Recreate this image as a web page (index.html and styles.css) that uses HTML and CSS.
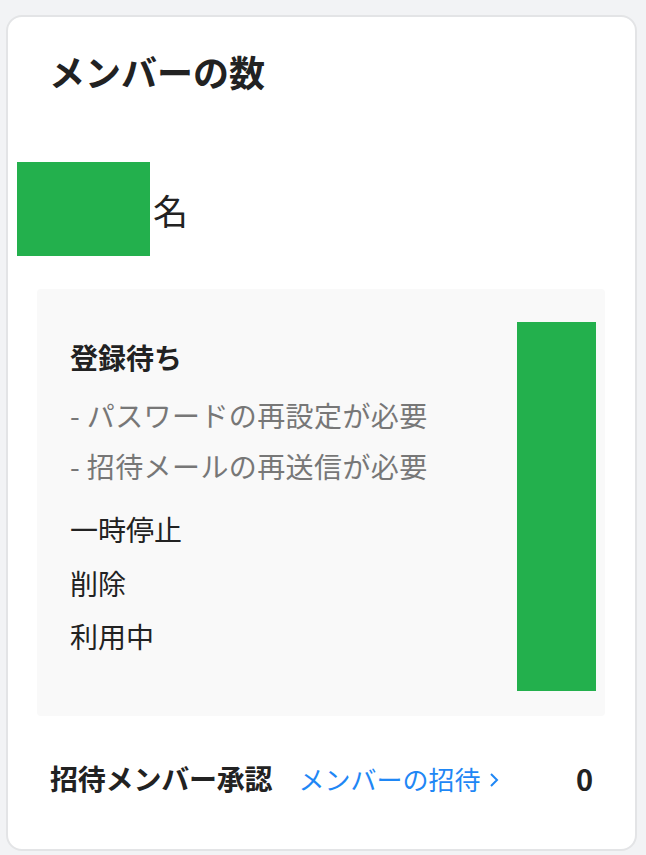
FILE: index.html
```html
<!DOCTYPE html>
<html lang="ja">
<head>
<meta charset="utf-8">
<link rel="stylesheet" href="styles.css">
</head>
<body>
<div class="card">
  <h2 class="title">メンバーの数</h2>
  <div class="count">
    <div class="count-box"></div>
    <span class="count-unit">名</span>
  </div>
  <div class="panel">
    <div class="status-list">
      <div class="status-head">登録待ち</div>
      <div class="status-sub first">- パスワードの再設定が必要</div>
      <div class="status-sub">- 招待メールの再送信が必要</div>
      <div class="status-item first">一時停止</div>
      <div class="status-item">削除</div>
      <div class="status-item">利用中</div>
    </div>
    <div class="panel-bar"></div>
  </div>
  <div class="invite">
    <span class="invite-label">招待メンバー承認</span>
    <a class="invite-link">メンバーの招待<svg class="chev" width="12" height="18" viewBox="0 0 12 18"><path d="M3 3 L9 9 L3 15" fill="none" stroke="#1f87f5" stroke-width="2"/></svg></a>
    <span class="invite-count">0</span>
  </div>
</div>
</body>
</html>
```
FILE: styles.css
```css
html, body {
  margin: 0;
  padding: 0;
  background: #f2f3f5;
}
body {
  font-family: "Noto Sans CJK JP", "Noto Sans", sans-serif;
  color: #222;
  padding: 15px 10px 5px 6px;
}
.card {
  box-sizing: border-box;
  width: 631px;
  height: 836px;
  background: #fff;
  border: 2px solid #e3e4e6;
  border-radius: 16px;
  padding: 0;
}
.title {
  margin: 0;
  padding: 28px 0 0 41px;
  font-size: 36px;
  font-weight: 700;
  line-height: 52px;
  letter-spacing: 0;
}
.count {
  display: flex;
  align-items: center;
  margin-top: 65px;
  padding-left: 9px;
}
.count-box {
  width: 133px;
  height: 94px;
  background: #23b04d;
}
.count-unit {
  font-size: 35px;
  margin-left: 3px;
  line-height: 1;
}
.panel {
  margin: 33px 30px 0 29px;
  background: #f9f9f9;
  border-radius: 4px;
  height: 427px;
  display: flex;
  justify-content: space-between;
  padding: 33px 9px 0 33px;
  box-sizing: border-box;
}
.status-list {
  padding-top: 17px;
}
.status-head {
  font-size: 28px;
  font-weight: 700;
  line-height: 36px;
}
.status-sub {
  font-size: 28px;
  color: #777;
  line-height: 51px;
  letter-spacing: 0.4px;
}
.status-sub.first { margin-top: 15px; }
.status-item {
  font-size: 28px;
  line-height: 53.5px;
  color: #222;
}
.status-item.first { margin-top: 11px; }
.panel-bar {
  width: 79px;
  height: 369px;
  background: #23b04d;
}
.invite {
  display: flex;
  align-items: center;
  padding: 0 42px 0 42px;
  margin-top: 40px;
  height: 44px;
}
.invite-label {
  font-size: 28px;
  font-weight: 700;
  letter-spacing: -0.2px;
}
.invite-link {
  display: flex;
  align-items: center;
  font-size: 26px;
  color: #1f87f5;
  margin-left: 26px;
}
.chev {
  margin-left: 8px;
  margin-top: 3px;
}
.invite-count {
  margin-left: auto;
  font-size: 29px;
  font-weight: 700;
}
```
